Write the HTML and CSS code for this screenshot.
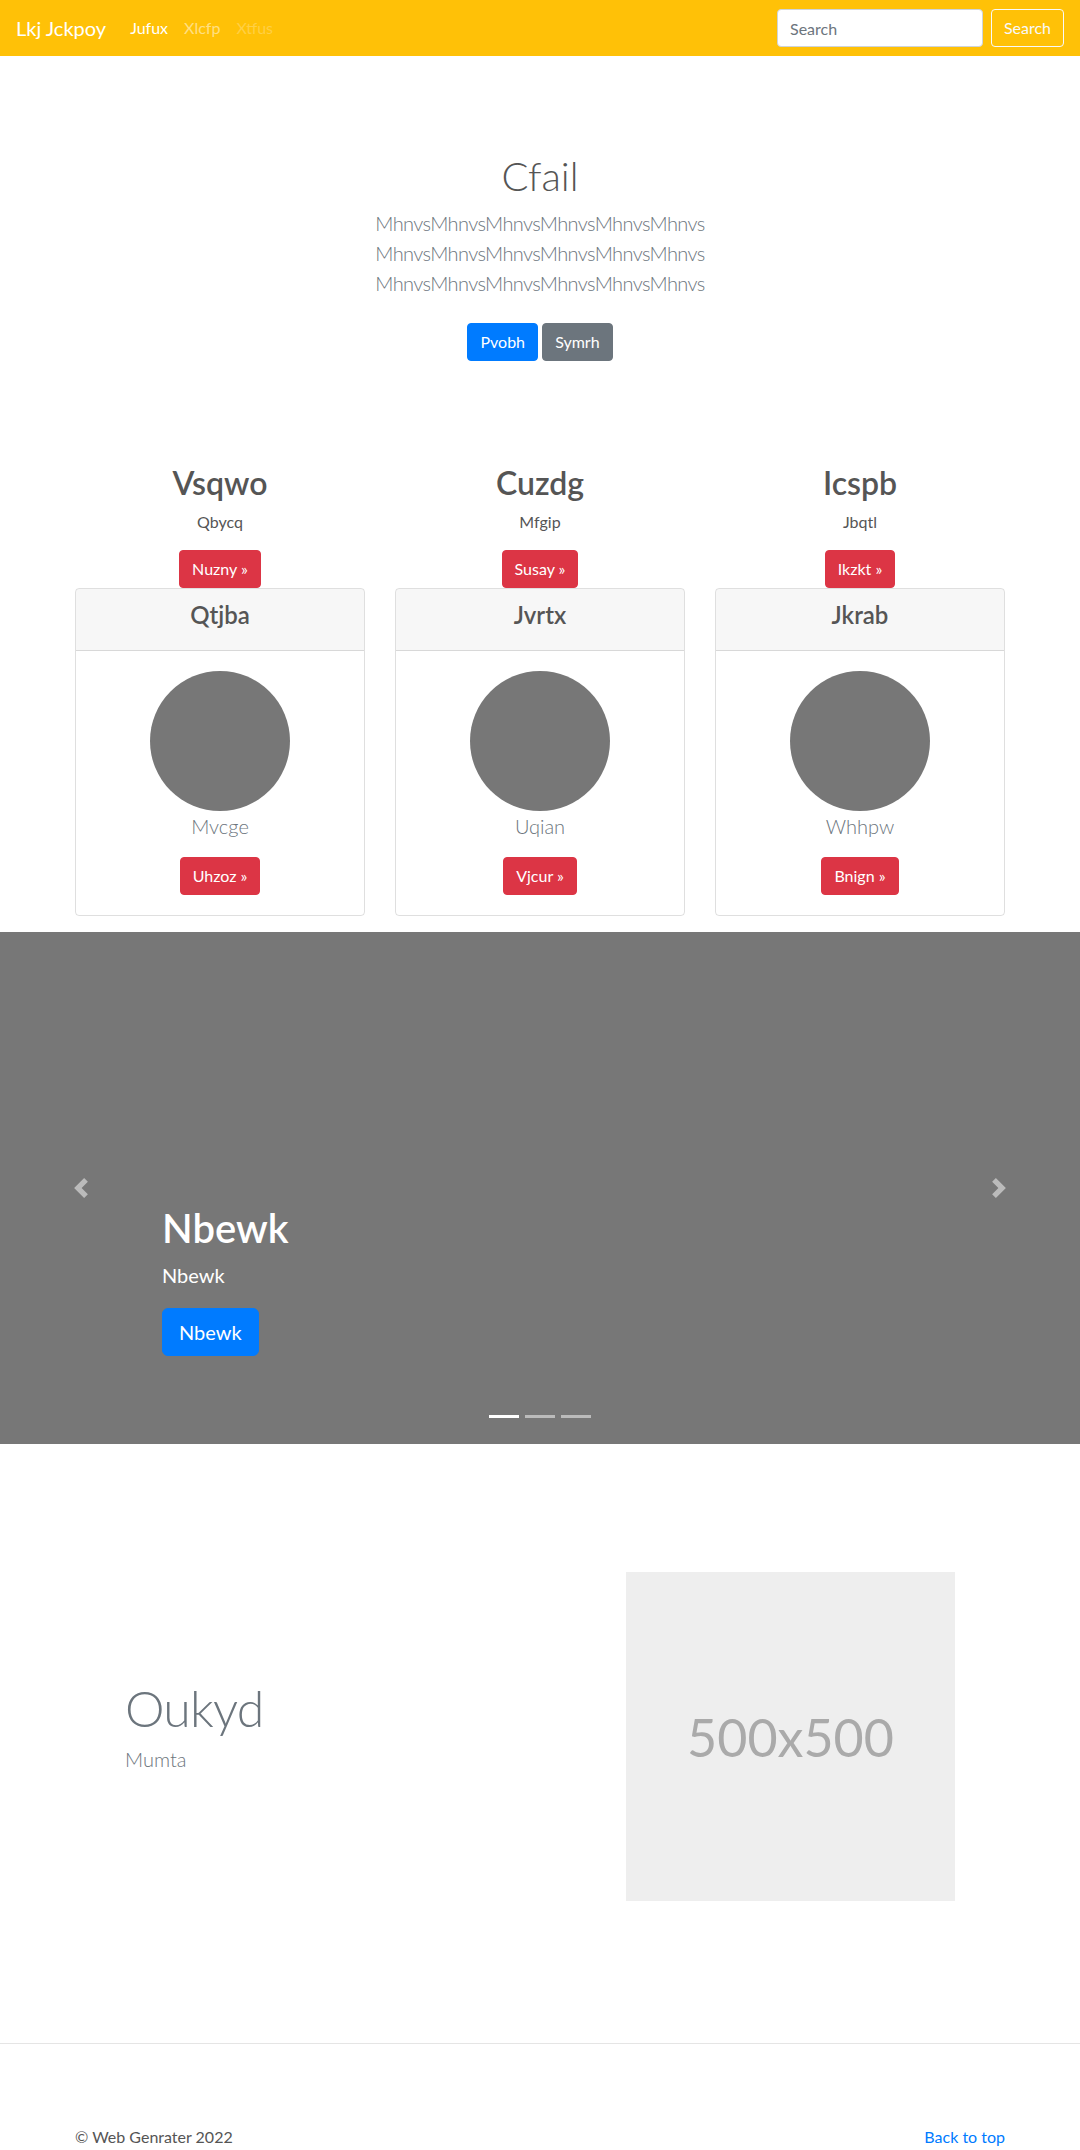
FILE: index.html
```html
<!DOCTYPE html>
<html lang="en">
<head>
<meta charset="utf-8">
<title>Lkj Jckpoy</title>
<link rel="stylesheet" href="styles.css">
</head>
<body>
<nav class="navbar">
  <a class="brand" href="#">Lkj Jckpoy</a>
  <ul class="nav">
    <li><a class="nav-link active" href="#">Jufux</a></li>
    <li><a class="nav-link" href="#">Xlcfp</a></li>
    <li><a class="nav-link disabled" href="#">Xtfus</a></li>
  </ul>
  <form class="search">
    <input class="search-input" type="text" placeholder="Search">
    <button class="search-btn" type="button">Search</button>
  </form>
</nav>

<section class="hero">
  <h1 class="hero-title">Cfail</h1>
  <p class="lead hero-lead">MhnvsMhnvsMhnvsMhnvsMhnvsMhnvs MhnvsMhnvsMhnvsMhnvsMhnvsMhnvs MhnvsMhnvsMhnvsMhnvsMhnvsMhnvs</p>
  <p class="hero-actions">
    <a class="btn btn-primary" href="#">Pvobh</a>
    <a class="btn btn-secondary" href="#">Symrh</a>
  </p>
</section>

<section class="marketing">
  <div class="col">
    <h2 class="col-title">Vsqwo</h2>
    <p class="col-text">Qbycq</p>
    <a class="btn btn-danger" href="#">Nuzny &raquo;</a>
    <div class="card">
      <div class="card-header"><h4 class="card-title">Qtjba</h4></div>
      <div class="card-body">
        <svg class="avatar" width="140" height="140" viewBox="0 0 140 140"><circle cx="70" cy="70" r="70" fill="#777"/></svg>
        <p class="card-lead">Mvcge</p>
        <a class="btn btn-danger" href="#">Uhzoz &raquo;</a>
      </div>
    </div>
  </div>
  <div class="col">
    <h2 class="col-title">Cuzdg</h2>
    <p class="col-text">Mfgip</p>
    <a class="btn btn-danger" href="#">Susay &raquo;</a>
    <div class="card">
      <div class="card-header"><h4 class="card-title">Jvrtx</h4></div>
      <div class="card-body">
        <svg class="avatar" width="140" height="140" viewBox="0 0 140 140"><circle cx="70" cy="70" r="70" fill="#777"/></svg>
        <p class="card-lead">Uqian</p>
        <a class="btn btn-danger" href="#">Vjcur &raquo;</a>
      </div>
    </div>
  </div>
  <div class="col">
    <h2 class="col-title">Icspb</h2>
    <p class="col-text">Jbqtl</p>
    <a class="btn btn-danger" href="#">Ikzkt &raquo;</a>
    <div class="card">
      <div class="card-header"><h4 class="card-title">Jkrab</h4></div>
      <div class="card-body">
        <svg class="avatar" width="140" height="140" viewBox="0 0 140 140"><circle cx="70" cy="70" r="70" fill="#777"/></svg>
        <p class="card-lead">Whhpw</p>
        <a class="btn btn-danger" href="#">Bnign &raquo;</a>
      </div>
    </div>
  </div>
</section>

<section class="carousel">
  <div class="carousel-caption">
    <h1 class="caption-title">Nbewk</h1>
    <p class="caption-text">Nbewk</p>
    <p class="caption-action"><a class="btn btn-lg btn-primary" href="#">Nbewk</a></p>
  </div>
  <a class="carousel-control prev" href="#">
    <svg width="20" height="20" viewBox="0 0 8 8"><path fill="#fff" d="M5.25 0l-4 4 4 4 1.5-1.5L4.25 4l2.5-2.5L5.25 0z"/></svg>
  </a>
  <a class="carousel-control next" href="#">
    <svg width="20" height="20" viewBox="0 0 8 8"><path fill="#fff" d="M2.75 0l-1.5 1.5L3.75 4l-2.5 2.5L2.75 8l4-4-4-4z"/></svg>
  </a>
  <ol class="carousel-indicators">
    <li class="active"></li>
    <li></li>
    <li></li>
  </ol>
</section>

<section class="featurette">
  <div class="featurette-text">
    <h2 class="featurette-heading">Oukyd</h2>
    <p class="lead featurette-lead">Mumta</p>
  </div>
  <div class="placeholder"><span class="placeholder-text">500x500</span></div>
</section>

<hr class="divider">

<footer class="footer">
  <p class="footer-copy">&copy; Web Genrater 2022</p>
  <a class="footer-link" href="#">Back to top</a>
</footer>
</body>
</html>
```
FILE: styles.css
```css
* { box-sizing: border-box; }

body {
  margin: 0;
  font-family: Lato, "Open Sans", sans-serif;
  font-size: 16px;
  line-height: 1.5;
  color: #555;
  background: #fff;
}

a { text-decoration: none; }

/* Navbar */
.navbar {
  display: flex;
  align-items: center;
  height: 56px;
  padding: 8px 16px;
  background: #ffc107;
}
.brand {
  font-size: 20px;
  line-height: 30px;
  color: #fff;
  margin-right: 16px;
}
.nav {
  display: flex;
  list-style: none;
  margin: 0;
  padding: 0;
}
.nav-link {
  display: block;
  padding: 8px;
  color: rgba(255,255,255,.5);
}
.nav-link.active { color: #fff; }
.nav-link.disabled { color: rgba(255,255,255,.25); }
.search {
  margin: 0 0 0 auto;
  display: flex;
  align-items: center;
}
.search-input {
  width: 206px;
  height: 38px;
  padding: 6px 12px;
  margin-right: 8px;
  font: 16px/1.5 Lato, sans-serif;
  color: #495057;
  background: #fff;
  border: 1px solid #ced4da;
  border-radius: 4px;
}
.search-input::placeholder { color: #6c757d; }
.search-btn {
  height: 38px;
  width: 73px;
  padding: 6px 10px;
  font: 16px/1.5 Lato, sans-serif;
  color: #f8f9fa;
  background: transparent;
  border: 1px solid #f8f9fa;
  border-radius: 4px;
}

/* Buttons */
.btn {
  display: inline-block;
  padding: 6px 12px;
  font-size: 16px;
  line-height: 24px;
  color: #fff;
  border: 1px solid transparent;
  border-radius: 4px;
  vertical-align: middle;
}
.btn-primary { background: #007bff; border-color: #007bff; }
.btn-secondary { background: #6c757d; border-color: #6c757d; }
.btn-danger { background: #dc3545; border-color: #dc3545; }
.btn-lg {
  padding: 8px 16px;
  font-size: 20px;
  line-height: 30px;
  border-radius: 6px;
}

.lead {
  font-size: 20px;
  font-weight: 300;
  line-height: 30px;
}

/* Hero */
.hero {
  padding: 96px 0;
  text-align: center;
}
.hero-title {
  margin: 0 0 8px;
  font-size: 40px;
  font-weight: 300;
  line-height: 48px;
  color: #555;
}
.hero-lead {
  width: 450px;
  margin: 0 auto 16px;
  color: #6c757d;
  letter-spacing: -0.6px;
}
.hero-actions {
  margin: 0;
  line-height: 52px;
  height: 54px;
}

/* Marketing columns */
.marketing {
  width: 960px;
  margin: 0 auto;
  display: grid;
  grid-template-columns: repeat(3, 1fr);
}
.col {
  padding: 0 15px;
  margin-bottom: 16px;
  text-align: center;
}
.col-title {
  margin: 0 0 8px;
  font-size: 32px;
  font-weight: 600;
  line-height: 38.4px;
  color: #555;
}
.col-text {
  margin: 0 0 16px;
}
.card {
  border: 1px solid rgba(0,0,0,.125);
  border-radius: 4px;
  overflow: hidden;
}
.card-header {
  padding: 12px 20px;
  background: rgba(0,0,0,.03);
  border-bottom: 1px solid rgba(0,0,0,.125);
}
.card-title {
  margin: 0 0 8px;
  font-size: 24px;
  font-weight: 600;
  line-height: 28.8px;
  color: #555;
}
.card-body {
  padding: 20px;
}
.avatar {
  display: block;
  margin: 0 auto;
}
.card-lead {
  margin: 0 0 16px;
  font-size: 20px;
  font-weight: 300;
  line-height: 30px;
  color: #6c757d;
}

/* Carousel */
.carousel {
  position: relative;
  height: 512px;
  background: #777;
}
.carousel-caption {
  position: absolute;
  left: 15%;
  right: 15%;
  bottom: 88px;
  color: #fff;
  text-align: left;
}
.caption-title {
  margin: 0 0 8px;
  font-size: 40px;
  font-weight: 600;
  line-height: 48px;
}
.caption-text {
  margin: 0 0 18px;
  font-size: 20px;
  line-height: 30px;
}
.caption-action {
  margin: 0;
  line-height: 0;
}
.carousel-control {
  position: absolute;
  top: 0;
  bottom: 0;
  width: 15%;
  display: flex;
  align-items: center;
  justify-content: center;
  opacity: .5;
}
.carousel-control.prev { left: 0; }
.carousel-control.next { right: 0; }
.carousel-indicators {
  position: absolute;
  left: 0;
  right: 0;
  bottom: 0;
  display: flex;
  justify-content: center;
  list-style: none;
  margin: 0 0 16px;
  padding: 0;
}
.carousel-indicators li {
  width: 30px;
  height: 3px;
  margin: 0 3px;
  border-top: 10px solid transparent;
  border-bottom: 10px solid transparent;
  box-sizing: content-box;
  background: #fff;
  background-clip: padding-box;
  opacity: .5;
}
.carousel-indicators li.active { opacity: 1; }

/* Featurette */
.featurette {
  width: 830px;
  margin: 0 auto;
  padding: 128px 0 142px;
  display: grid;
  grid-template-columns: 1fr 329px;
  align-items: center;
}
.featurette-text {
  margin-bottom: 17px;
}
.featurette-heading {
  margin: 0 0 11px;
  font-size: 50px;
  font-weight: 300;
  line-height: 1;
  letter-spacing: -0.8px;
  color: #6c757d;
}
.featurette-lead {
  margin: 0;
  color: #6c757d;
}
.placeholder {
  width: 329px;
  height: 329px;
  background: #eee;
  display: flex;
  align-items: center;
  justify-content: center;
}
.placeholder-text {
  font-size: 52px;
  color: #aaa;
  line-height: 1;
}

/* Footer */
.divider {
  margin: 0;
  border: 0;
  border-top: 1px solid rgba(0,0,0,.1);
}
.footer {
  width: 960px;
  margin: 0 auto;
  padding: 81px 15px 48px;
  display: flex;
  justify-content: space-between;
  align-items: flex-start;
}
.footer-copy { margin: 0; }
.footer-link { color: #007bff; }
```
